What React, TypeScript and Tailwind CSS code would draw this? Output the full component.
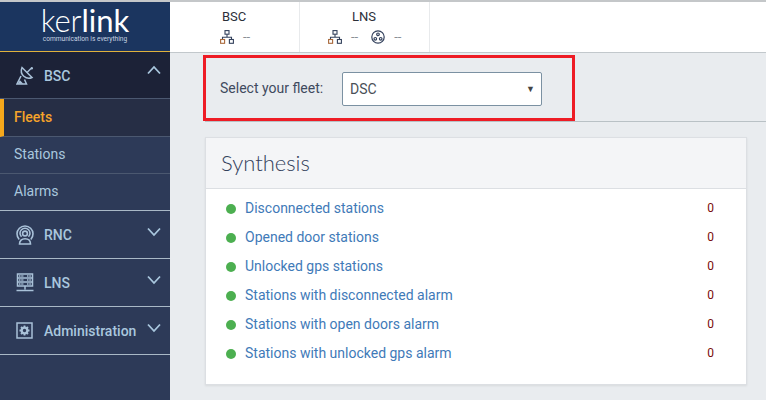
import React from "react";

const Chevron = () => (
  <svg width="14" height="10" viewBox="0 0 14 10" fill="none" stroke="#a9c7de" strokeWidth="1.8" className="absolute right-[9px] top-[16px]">
    <path d="M1 1.5 7 8l6-6.5" />
  </svg>
);

const Dish = () => (
  <svg width="18" height="19" viewBox="0 0 18 19" fill="none" stroke="#a9c1d8" strokeWidth="1.5">
    <path d="M6 1.500 16 11.500C10.500 14 3 9 6 1.500Z" />
    <path d="M11 6.500 15 2.500" />
    <circle cx="15.800" cy="2.200" r="1.200" fill="#a9c1d8" stroke="none" />
    <path d="M5 10 1 18h9.500L8.500 13.500" />
    <path d="M4 15.500 3 17h2.500z" fill="#a9c1d8" />
  </svg>
);

const Rnc = () => (
  <svg width="18" height="20" viewBox="0 0 18 20" fill="none" stroke="#a9c1d8" strokeWidth="1.600">
    <path d="M3.200 14.500A8 8 0 1 1 14.800 14.500" />
    <path d="M5.500 11.800a5 5 0 1 1 7 0" />
    <circle cx="9" cy="8.500" r="2.400" />
    <path d="M3.500 19c0-3.200 2.300-5.200 5.500-5.200s5.500 2 5.500 5.200z" />
  </svg>
);

const Server = () => (
  <svg width="18" height="19" viewBox="0 0 18 19" fill="none" stroke="#a9c1d8" strokeWidth="1.500">
    <rect x="1.500" y="1" width="15" height="12" />
    <path d="M1.500 5h15M1.500 9h15M9 13v3.500M0.500 17.500h17" />
    <path d="M3 3h5M3 7h5M3 11h5M11 3h4M11 7h4M11 11h4" strokeWidth="1.400" strokeDasharray="1.500 0.800" />
  </svg>
);

const Admin = () => (
  <svg width="17" height="17" viewBox="0 0 17 17" fill="none" stroke="#a9c1d8" strokeWidth="1.500">
    <rect x="1" y="1" width="15" height="15" />
    <circle cx="8.500" cy="8.500" r="2.800" strokeWidth="2.200" />
    <path d="M8.500 3.500v2M8.500 11.500v2M3.500 8.500h2M11.500 8.500h2M5 5l1.500 1.500M10.500 10.500 12 12M12 5l-1.500 1.500M6.500 10.500 5 12" strokeWidth="1.800" />
  </svg>
);

const Net = () => (
  <svg width="14" height="14" viewBox="0 0 14 14" fill="none" strokeWidth="1.100">
    <rect x="5" y="0.600" width="4" height="3.600" stroke="#33415c" />
    <path d="M7 4.200v3M2.500 9.500V7.200h9v2.300" stroke="#33415c" />
    <rect x="0.600" y="9.500" width="4" height="3.800" stroke="#a8683a" />
    <rect x="9.400" y="9.500" width="4" height="3.800" stroke="#33415c" />
  </svg>
);

const Radio = () => (
  <svg width="14" height="14" viewBox="0 0 14 14" fill="none" stroke="#33415c" strokeWidth="1.200">
    <circle cx="7" cy="7" r="6.200" />
    <circle cx="7" cy="4.300" r="1.300" />
    <circle cx="4.300" cy="8.800" r="1.300" />
    <circle cx="9.700" cy="8.800" r="1.300" />
  </svg>
);

const NavHead = ({ icon, label }: { icon: React.ReactNode; label: string }) => (
  <div className="relative flex h-[48px] items-center border-b border-[#a9b8c6] pl-[16px]">
    <span className="flex w-[28px] justify-start">{icon}</span>
    <span className="pt-[2px] text-[14px] font-medium text-[#a9c7de]">{label}</span>
    <Chevron />
  </div>
);

const rows = [
  "Disconnected stations",
  "Opened door stations",
  "Unlocked gps stations",
  "Stations with disconnected alarm",
  "Stations with open doors alarm",
  "Stations with unlocked gps alarm",
];

export default function App() {
  return (
    <div className="relative flex h-[400px] w-[766px] overflow-hidden border-t-2 border-[#c4c7c9] bg-[#e9ecef] font-['Roboto',sans-serif]">
      <aside className="flex w-[170px] shrink-0 flex-col bg-[#2d3a58]">
        <div className="flex h-[50px] flex-col items-center border-b border-[#e0b13c] bg-[#1b355f] text-white">
          <span className="mt-[4px] h-[29px] font-['Lato',sans-serif] text-[31px] font-light leading-[29px]">
            ker<span className="font-normal">link</span>
          </span>
          <span className="text-[6.6px] leading-[8px] text-[#c8d4e2]">communication is everything</span>
        </div>
        <div className="relative flex h-[47px] items-center border-b border-[#4b5870] bg-[#1c2237] pl-[16px]">
          <span className="flex w-[28px]"><Dish /></span>
          <span className="pt-[2px] text-[14px] font-medium text-[#a9c7de]">BSC</span>
          <svg width="14" height="10" viewBox="0 0 14 10" fill="none" stroke="#a9c7de" strokeWidth="1.800" className="absolute right-[9px] top-[13px]">
            <path d="M1 8.500 7 2l6 6.500" />
          </svg>
        </div>
        <div className="flex h-[38px] items-center border-b border-[#4b5870] border-l-4 border-l-[#f5a81c] bg-[#262e45] pl-[10px] text-[14px] font-medium text-[#f5a32a]">Fleets</div>
        <div className="flex h-[37px] items-center border-b border-[#4b5870] pb-[2px] pl-[14px] text-[14px] text-[#a9c7de]">Stations</div>
        <div className="flex h-[37px] items-center border-b border-[#a9b8c6] pb-[2px] pl-[14px] text-[14px] text-[#a9c7de]">Alarms</div>
        <NavHead icon={<Rnc />} label="RNC" />
        <NavHead icon={<Server />} label="LNS" />
        <NavHead icon={<Admin />} label="Administration" />
      </aside>

      <main className="flex min-w-0 flex-1 flex-col">
        <header className="flex h-[51px] border-b border-[#c2c8cc] bg-white text-[13px] text-[#33415c]">
          <div className="flex w-[130px] flex-col border-r border-[#e8eaec] pl-[50px] pt-[6px]">
            <span className="ml-[2px] h-[17px] leading-[17px] text-[#2b2f38]">BSC</span>
            <span className="flex items-center gap-[9px] pt-[2px] text-[13px] text-[#8a8f96]"><Net />--</span>
          </div>
          <div className="flex w-[130px] flex-col border-r border-[#e8eaec] pt-[6px]">
            <span className="h-[17px] pl-[52px] leading-[17px] text-[#2b2f38]">LNS</span>
            <span className="flex items-center gap-[9px] pl-[28px] pt-[2px] text-[13px] text-[#8a8f96]"><Net />--<span className="ml-[4px]"><Radio /></span>--</span>
          </div>
        </header>

        <div className="ml-[35px] flex h-[69px] shrink-0 items-center border-b border-[#b9c1c5] pl-[15px] pt-[3px]">
          <span className="w-[122px] text-[14px] text-[#3f4a5e]">Select your fleet:</span>
          <div className="relative flex h-[34px] w-[200px] items-center rounded-[2px] border border-[#7b91a2] bg-white pl-[7px] pt-[1px] text-[14px] text-[#495057]">
            DSC
            <span className="absolute right-[6px] top-[10px] text-[9px] leading-[12px] text-[#444]">▼</span>
          </div>
        </div>

        <section className="ml-[35px] mt-[15px] w-[542px] border border-[#dcdfe3] bg-white shadow-[0_1px_2px_rgba(0,0,0,0.08)]">
          <div className="flex h-[51px] items-center border-b border-[#dcdfe3] bg-[#f4f5f7] pb-[2px] pl-[15px] font-['Lato',sans-serif] text-[22px] font-light text-[#33415c]">Synthesis</div>
          <ul className="pb-[16px] pt-[5px]">
            {rows.map((r) => (
              <li key={r} className="flex h-[29px] items-center pl-[20px] pr-[32px] text-[14px]">
                <span className="mr-[9px] h-[10px] w-[10px] rounded-full bg-[#4caf50]" />
                <span className="flex-1 text-[#3f7ab8]">{r}</span>
                <span className="mb-[1px] text-[12px] text-[#7a0c0c]">0</span>
              </li>
            ))}
          </ul>
        </section>
      </main>

      <div className="pointer-events-none absolute left-[203px] top-[53px] h-[66px] w-[372px] border-[3px] border-[#ee1c25]" />
    </div>
  );
}
